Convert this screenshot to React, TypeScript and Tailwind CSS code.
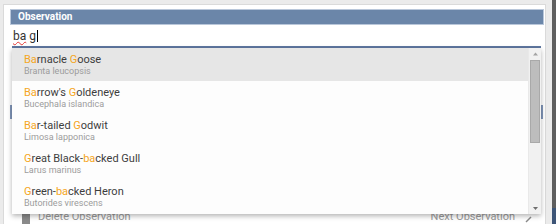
import React from "react";

type Item = { name: React.ReactNode; sci: string };

const O = ({ children }: { children: React.ReactNode }) => (
  <span className="text-[#f5a623]">{children}</span>
);

const items: Item[] = [
  { name: <><O>Ba</O>rnacle <O>G</O>oose</>, sci: "Branta leucopsis" },
  { name: <><O>Ba</O>rrow's <O>G</O>oldeneye</>, sci: "Bucephala islandica" },
  { name: <><O>Ba</O>r-tailed <O>G</O>odwit</>, sci: "Limosa lapponica" },
  { name: <><O>G</O>reat Black-<O>ba</O>cked Gull</>, sci: "Larus marinus" },
  { name: <><O>G</O>reen-<O>ba</O>cked Heron</>, sci: "Butorides virescens" },
];

export default function App() {
  return (
    <div className="relative w-[556px] h-[224px] bg-[#ebebeb] flex overflow-hidden font-['Roboto',sans-serif]">
      {/* main panel */}
      <div className="ml-[3px] mt-[4px] w-[543px] h-[220px] bg-white border-l border-r border-t border-[#dadada] flex flex-col">
        {/* header */}
        <div className="ml-[6px] mt-[4px] w-[534px] h-[16px] bg-[#6b86a9] border border-[#b9c7da] pl-[7px] text-[10px] leading-[14px] font-bold text-white">
          Observation
        </div>
        {/* input */}
        <div className="ml-[8px] w-[529px] h-[23px] border-b-2 border-[#5f77a0] pt-[2px] pl-[1px] text-[12px] leading-[19px] text-[#333]">
          <span className="underline decoration-wavy decoration-[#e53935] decoration-1 underline-offset-[1px]">ba</span>
          <span> g</span>
          <span className="inline-block w-px h-[12px] bg-black align-[-2px] ml-[1px]" />
        </div>
        {/* underlying form content */}
        <div className="flex-1 flex flex-col">
          <div className="mt-[57px] ml-[6px] w-[533px] h-[14px] border-l-2 border-r-2 border-[#8196b9]" />
          <div className="mt-auto flex items-start justify-between h-[13px] pl-[18px] pr-[12px]">
            <div className="flex items-start gap-[8px]">
              <div className="w-[8px] h-[13px] bg-[#8a8a8a] mt-[2px]" />
              <span className="text-[11px] leading-[13px] text-[#9a9a9a] -mt-[1px]">Delete Observation</span>
            </div>
            <div className="flex items-start gap-[10px]">
              <span className="text-[11px] leading-[13px] text-[#9a9a9a] -mt-[1px]">Next Observation</span>
              <svg width="8" height="8" viewBox="0 0 8 8" className="mt-[4px]">
                <path d="M1 7 L6 2" stroke="#8a8a8a" strokeWidth="1.5" />
              </svg>
            </div>
          </div>
        </div>
      </div>
      <div className="w-[6px]" />
      {/* right strip */}
      <div className="w-[4px] flex flex-col">
        <div className="h-[208px] bg-[#5e5e5e]" />
        <div className="flex-1 bg-[#3d5577]" />
      </div>

      {/* dropdown overlay */}
      <div className="absolute left-[12px] top-[48px] w-[529px] h-[166px] bg-[#fdfdfd] flex shadow-[0_2px_5px_rgba(0,0,0,0.3)]">
        <div className="flex-1 flex flex-col">
          {items.map((it, i) => (
            <div
              key={i}
              className={`h-[33px] shrink-0 pl-[12px] pt-[5px] ${i === 0 ? "bg-[#e6e6e6]" : ""}`}
            >
              <div className="text-[11px] leading-[13px] text-[#3d3d3d] whitespace-nowrap">{it.name}</div>
              <div className="text-[9px] leading-[11px] text-[#9c9c9c] whitespace-nowrap">{it.sci}</div>
            </div>
          ))}
        </div>
        <div className="w-[13px] bg-[#f1f1f1] border-l border-[#e9e9e9] flex flex-col items-center">
          <div className="h-[12px] flex items-center justify-center">
            <svg width="7" height="5" viewBox="0 0 7 5">
              <path d="M3.5 0.5 L6 3.5 L1 3.5 Z" fill="#a3a3a3" />
            </svg>
          </div>
          <div className="w-[10px] h-[83px] bg-[#bdbdbd] border border-[#a9a9a9]" />
          <div className="flex-1" />
          <div className="h-[12px] flex items-center justify-center">
            <svg width="7" height="5" viewBox="0 0 7 5">
              <path d="M1 1 L6 1 L3.5 4 Z" fill="#6e6e6e" />
            </svg>
          </div>
        </div>
      </div>
    </div>
  );
}
